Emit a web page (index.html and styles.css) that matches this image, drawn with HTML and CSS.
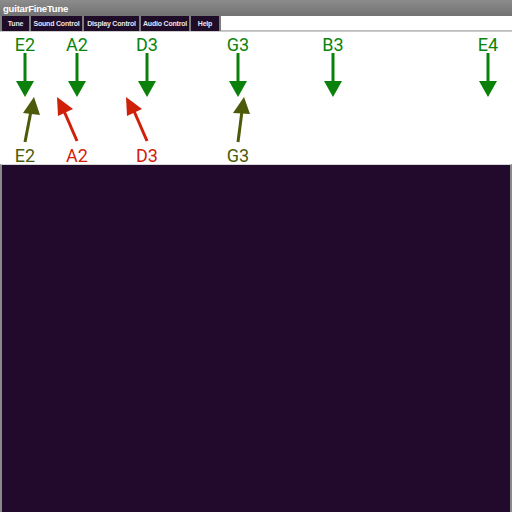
FILE: index.html
```html
<!DOCTYPE html>
<html>
<head>
<meta charset="utf-8">
<link rel="stylesheet" href="styles.css">
</head>
<body>
<div class="window">
  <div class="titlebar">guitarFineTune</div>
  <div class="tabbar">
    <div class="tab t1">Tune</div>
    <div class="tab t2">Sound Control</div>
    <div class="tab t3">Display Control</div>
    <div class="tab t4">Audio Control</div>
    <div class="tab t5">Help</div>
    <div class="tabfill"></div>
  </div>
  <div class="notes">
    <svg class="notesvg" width="512" height="132" viewBox="0 31 512 132">
      <g class="lbl-green">
        <text x="25" y="50">E2</text>
        <text x="77" y="50">A2</text>
        <text x="147" y="50">D3</text>
        <text x="238" y="50">G3</text>
        <text x="333" y="50">B3</text>
        <text x="488" y="50">E4</text>
      </g>
      <g class="down">
        <line x1="25" y1="52" x2="25" y2="81"/><polygon points="16,80 34,80 25,96"/>
        <line x1="77" y1="52" x2="77" y2="81"/><polygon points="68,80 86,80 77,96"/>
        <line x1="147" y1="52" x2="147" y2="81"/><polygon points="138,80 156,80 147,96"/>
        <line x1="238" y1="52" x2="238" y2="81"/><polygon points="229,80 247,80 238,96"/>
        <line x1="333" y1="52" x2="333" y2="81"/><polygon points="324,80 342,80 333,96"/>
        <line x1="488" y1="52" x2="488" y2="81"/><polygon points="479,80 497,80 488,96"/>
      </g>
      <g class="olive">
        <line x1="25" y1="141" x2="31" y2="110"/><polygon points="34,96 23,112 40,114"/>
        <line x1="238" y1="141" x2="242" y2="110"/><polygon points="244,96 233,112 250,113"/>
      </g>
      <g class="red">
        <line x1="77" y1="140" x2="64" y2="110"/><polygon points="57,96 58,115 73,108"/>
        <line x1="147" y1="140" x2="134" y2="110"/><polygon points="126,96 127,115 142,108"/>
      </g>
      <text class="lbl-olive" x="25" y="161">E2</text>
      <text class="lbl-red" x="77" y="161">A2</text>
      <text class="lbl-red" x="147" y="161">D3</text>
      <text class="lbl-olive" x="238" y="161">G3</text>
    </svg>
  </div>
  <div class="display"></div>
</div>
</body>
</html>
```
FILE: styles.css
```css
html, body {
  margin: 0;
  padding: 0;
  width: 512px;
  height: 512px;
  overflow: hidden;
  background: #ffffff;
}
.window {
  width: 512px;
  height: 512px;
  display: flex;
  flex-direction: column;
  font-family: "Liberation Sans", Arial, sans-serif;
}
.titlebar {
  height: 16px;
  background: linear-gradient(#8c8c8c, #727272);
  color: #ffffff;
  font-weight: bold;
  font-size: 9.5px;
  letter-spacing: -0.2px;
  line-height: 17px;
  padding-left: 3px;
  flex: none;
}
.tabbar {
  height: 15px;
  display: flex;
  gap: 2px;
  background: #7d7d7d;
  padding-left: 2px;
  flex: none;
}
.tab {
  background: #1e0c28;
  color: #e8e4ec;
  font-size: 7px;
  letter-spacing: -0.2px;
  line-height: 15px;
  text-align: center;
  font-weight: bold;
  white-space: nowrap;
}
.t1 { width: 27px; }
.t2 { width: 51px; }
.t3 { width: 55px; }
.t4 { width: 48px; }
.t5 { width: 28px; }
.tabfill {
  flex: 1;
  background: #ffffff;
  border-bottom: 1px solid #bbbbbb;
}
.notes {
  height: 132px;
  flex: none;
  background: #ffffff;
  border-top: 1px solid #cccccc;
}
.notesvg {
  display: block;
  overflow: visible;
}
.notesvg text {
  font-family: Roboto, "Noto Sans", sans-serif;
  font-size: 18px;
  text-anchor: middle;
}
.lbl-green { fill: #0b830b; }
.lbl-olive { fill: #4c5c0a; }
.lbl-red { fill: #d1210a; }
.down line { stroke: #0b800b; stroke-width: 3; }
.down polygon { fill: #0b800b; }
.olive line { stroke: #4c5a0a; stroke-width: 3; }
.olive polygon { fill: #4c5a0a; }
.red line { stroke: #cf200a; stroke-width: 3; }
.red polygon { fill: #cf200a; }
.display {
  flex: 1;
  background: #210a2c;
  border-left: 2px solid #8a8a8a;
  border-right: 2px solid #8a8a8a;
  border-top: 1px solid #d8d8d8;
}
```
